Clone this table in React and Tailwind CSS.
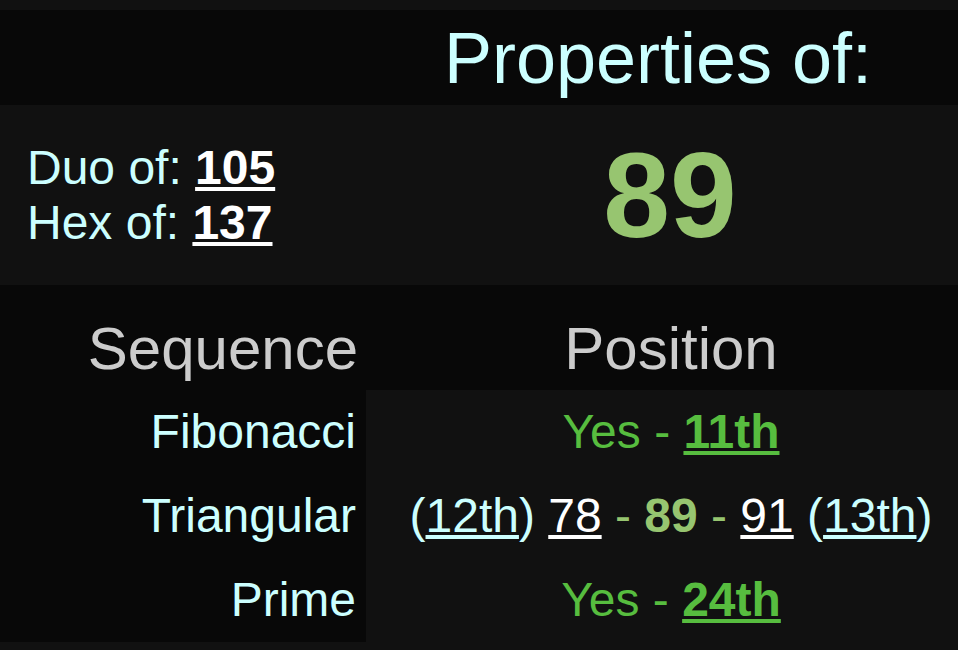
export default function App() {
  return (
    <div className="min-h-[650px] bg-[#111111] pt-[10px] font-['Liberation_Sans',Arial,sans-serif]">
      {/* title bar */}
      <div className="flex h-[95px] items-center bg-[#080808]">
        <div className="w-[366px] shrink-0" />
        <h1 className="flex-1 pr-[8px] text-center text-[72px] leading-none text-[#ccffff]">Properties of:</h1>
      </div>

      {/* number row */}
      <div className="flex h-[180px] items-center">
        <div className="w-[366px] shrink-0 pl-[27px] text-[48px] leading-[1.149] text-[#ccffff]">
          <div>
            Duo of: <a className="font-bold text-white underline">105</a>
          </div>
          <div>
            Hex of: <a className="font-bold text-white underline">137</a>
          </div>
        </div>
        <div className="flex-1 pl-[16px] text-center text-[120px] font-bold leading-none text-[#97c570]">89</div>
      </div>

      {/* sequences table */}
      <div className="bg-[#080808]">
        <div className="flex h-[105px] pt-[34px] text-[60px] leading-none text-[#cccccc]">
          <div className="w-[366px] shrink-0 pr-[8px] text-right">Sequence</div>
          <div className="flex-1 pl-[18px] text-center">Position</div>
        </div>
        <div className="grid grid-cols-[366px_1fr] text-[48px] leading-[1.149]">
          <div className="flex h-[84px] items-center justify-end pr-[10px] text-[#ccffff]">Fibonacci</div>
          <div className="flex h-[84px] items-center justify-center bg-[#111111] pl-[18px] text-[#57bd3f]">
            <span className="whitespace-pre">Yes - </span>
            <a className="font-bold underline">11th</a>
          </div>

          <div className="flex h-[84px] items-center justify-end pr-[10px] text-[#ccffff]">Triangular</div>
          <div className="flex h-[84px] items-center justify-center bg-[#111111] pl-[18px] whitespace-pre">
            <span className="text-[#ccffff]">
              (<a className="underline">12th</a>)
            </span>
            <span> </span>
            <a className="text-white underline">78</a>
            <span className="text-[#97c570]"> - </span>
            <span className="font-bold text-[#97c570]">89</span>
            <span className="text-[#97c570]"> - </span>
            <a className="text-white underline">91</a>
            <span> </span>
            <span className="text-[#ccffff]">
              (<a className="underline">13th</a>)
            </span>
          </div>

          <div className="flex h-[84px] items-center justify-end pr-[10px] text-[#ccffff]">Prime</div>
          <div className="flex h-[84px] items-center justify-center bg-[#111111] pl-[18px] text-[#57bd3f]">
            <span className="whitespace-pre">Yes - </span>
            <a className="font-bold underline">24th</a>
          </div>
        </div>
      </div>
    </div>
  );
}
